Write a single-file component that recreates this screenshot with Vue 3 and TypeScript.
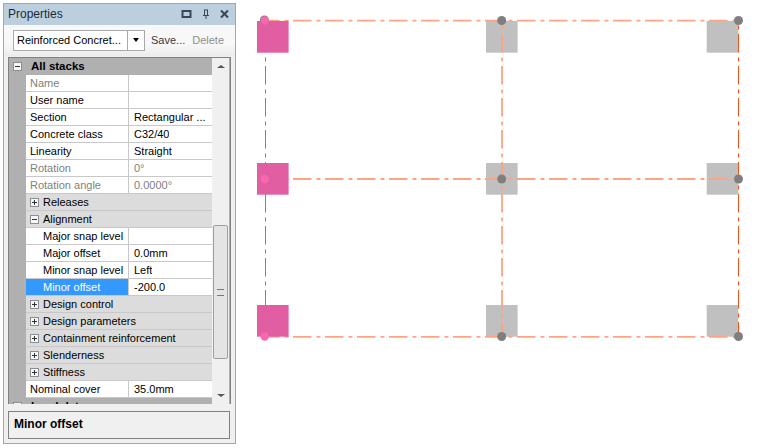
<script setup lang="ts">
type Row = { kind: 'group' | 'prop'; label: string; value?: string; indent?: boolean; open?: boolean; disabled?: boolean; selected?: boolean };
const rows: Row[] = [
  { kind: 'prop', label: 'Name', disabled: true, value: '' },
  { kind: 'prop', label: 'User name', value: '' },
  { kind: 'prop', label: 'Section', value: 'Rectangular ...' },
  { kind: 'prop', label: 'Concrete class', value: 'C32/40' },
  { kind: 'prop', label: 'Linearity', value: 'Straight' },
  { kind: 'prop', label: 'Rotation', value: '0°', disabled: true },
  { kind: 'prop', label: 'Rotation angle', value: '0.0000°', disabled: true },
  { kind: 'group', label: 'Releases' },
  { kind: 'group', label: 'Alignment', open: true },
  { kind: 'prop', label: 'Major snap level', value: '', indent: true },
  { kind: 'prop', label: 'Major offset', value: '0.0mm', indent: true },
  { kind: 'prop', label: 'Minor snap level', value: 'Left', indent: true },
  { kind: 'prop', label: 'Minor offset', value: '-200.0', indent: true, selected: true },
  { kind: 'group', label: 'Design control' },
  { kind: 'group', label: 'Design parameters' },
  { kind: 'group', label: 'Containment reinforcement' },
  { kind: 'group', label: 'Slenderness' },
  { kind: 'group', label: 'Stiffness' },
  { kind: 'prop', label: 'Nominal cover', value: '35.0mm' },
];
const colXs = [257, 486, 706.7];
const colYs = [21, 163, 305];
const dotXs = [264.7, 501.7, 738.5];
const dotYs = [20.5, 179, 336.5];
const lineYs = [20.7, 179, 336.9];
</script>

<template>
  <div class="page">
    <aside class="panel">
      <header class="title">
        <span>Properties</span>
        <span class="title-icons">
          <svg width="12" height="10" viewBox="0 0 12 10"><rect x="1.5" y="2" width="8" height="6" fill="none" stroke="#3c4650" stroke-width="2" /></svg>
          <svg width="12" height="11" viewBox="0 0 12 11"><path d="M4.5 1v5M7.5 1v5M3 6.5h6M6 6.5V10M4 1h4" fill="none" stroke="#3c4650" /></svg>
          <svg width="11" height="10" viewBox="0 0 11 10"><path d="M2 1.5l7 7M9 1.5l-7 7" fill="none" stroke="#3c4650" stroke-width="2" /></svg>
        </span>
      </header>
      <div class="tools">
        <div class="combo">
          <span class="combo-text">Reinforced Concret...</span>
          <span class="combo-arrow"><i></i></span>
        </div>
        <span class="link">Save...</span>
        <span class="link off">Delete</span>
      </div>
      <div class="grid">
        <div class="grid-main">
          <div class="row head">
            <span class="gutter-cell"><span class="box minus"></span></span>
            <b>All stacks</b>
          </div>
          <div v-for="r in rows" :key="r.label" class="row" :class="r.kind">
            <span class="gutter-cell"></span>
            <template v-if="r.kind === 'group'">
              <span class="box" :class="r.open ? 'minus' : 'plus'"></span>
              <span class="group-label">{{ r.label }}</span>
            </template>
            <template v-else>
              <span class="name" :class="{ indent: r.indent, dim: r.disabled, sel: r.selected }">{{ r.label }}</span>
              <span class="value" :class="{ dim: r.disabled }">{{ r.value }}</span>
            </template>
          </div>
          <div class="row head">
            <span class="gutter-cell"><span class="box plus"></span></span>
            <b>Load data</b>
          </div>
        </div>
        <div class="scroll">
          <span class="arrow up"></span>
          <div class="track"><div class="thumb"><i></i></div></div>
          <span class="arrow down"></span>
        </div>
      </div>
      <div class="desc"><b>Minor offset</b></div>
    </aside>
    <svg class="canvas" width="768" height="448" viewBox="0 0 768 448">
      <template v-for="y in colYs" :key="'g' + y">
        <rect v-for="x in colXs.slice(1)" :key="x" :x="x" :y="y" width="31.6" height="31.7" fill="#c0c0c0" />
      </template>
      <line v-for="y in lineYs" :key="'h' + y" x1="261" x2="739" :y1="y" :y2="y" class="axis wide" />
      <line x1="502" x2="502" y1="2" y2="337" class="axis wide" />
      <line x1="265.5" x2="265.5" y1="2" y2="337" class="axis thin" />
      <line x1="738.5" x2="738.5" y1="2" y2="337" class="axis thin right" />
      <rect v-for="y in colYs" :key="'p' + y" x="257" :y="y" width="31.6" height="31.7" fill="#e15ea3" />
      <rect x="735" y="1" width="8" height="19" fill="#fff" />
      <rect x="498" y="1" width="8" height="19" fill="#fff" />
      <rect x="261" y="1" width="8" height="19" fill="#fff" />
      <circle cx="264.4" cy="20" r="4.5" fill="#7f7f7f" />
      <template v-for="y in dotYs" :key="'d' + y">
        <circle v-for="(x, i) in dotXs" :key="x" :cx="x" :cy="y" :r="i === 0 ? 4.2 : 4.5" :fill="i === 0 ? '#fb67ae' : '#7f7f7f'" />
      </template>
    </svg>
  </div>
</template>

<style scoped>
.page {
  position: relative;
  width: 768px;
  height: 448px;
  background: #fff;
  overflow: hidden;
  font-family: "Liberation Sans", Arial, sans-serif;
  font-size: 11px;
  color: #000;
}
.canvas { position: absolute; left: 0; top: 0; }
.axis { stroke-dasharray: 18.5 5 4 4.5; }
.axis.wide { stroke: #ffa481; stroke-width: 1.8; }
.axis.thin { stroke: #ff5a14; stroke-width: 1; }
.axis.right { stroke: #ee5218; }
.panel {
  position: absolute;
  left: 3px;
  top: 3px;
  width: 233px;
  height: 441px;
  box-sizing: border-box;
  border: 1px solid #a6a6a6;
  background: #f0f0f0;
  z-index: 1;
  display: flex;
  flex-direction: column;
}
.title {
  height: 21px;
  background: #bccfdf;
  display: flex;
  align-items: center;
  justify-content: space-between;
  padding: 0 5px 1px 4px;
  box-sizing: border-box;
  font-size: 12px;
  color: #1c2a36;
  flex: none;
}
.title-icons { display: flex; gap: 7px; align-items: center; }
.title-icons svg { display: block; }
.tools {
  height: 31px;
  flex: none;
  display: flex;
  align-items: center;
  padding: 0 0 1px 9px;
  box-sizing: border-box;
  background: linear-gradient(#f8f8f8, #f8f8f8 60%, #ececec);
}
.combo {
  width: 132px;
  height: 21px;
  box-sizing: border-box;
  border: 1px solid #a9a9a9;
  background: #fff;
  display: flex;
  align-items: center;
  color: #000;
  flex: none;
}
.combo-text { flex: 1; padding-left: 3px; white-space: nowrap; overflow: hidden; }
.combo-arrow {
  width: 16px;
  height: 100%;
  border-left: 1px solid #a9a9a9;
  display: flex;
  align-items: center;
  justify-content: center;
}
.combo-arrow i {
  width: 0;
  height: 0;
  border: 3.5px solid transparent;
  border-top: 4px solid #000;
  border-bottom: 0;
}
.link { margin-left: 6px; color: #3a3a3a; }
.link.off { color: #8f8f8f; margin-left: 7px; }
.grid {
  margin: 1px 4px 0;
  height: 347px;
  flex: none;
  box-sizing: border-box;
  border: 1px solid #808080;
  border-bottom: 0;
  display: flex;
  background: #b0b0b0;
  overflow: hidden;
}
.grid-main { width: 203px; flex: none; }
.row {
  height: 17px;
  box-sizing: border-box;
  display: flex;
  align-items: center;
  background: #fff;
  border-bottom: 1px solid #c8c8c8;
  white-space: nowrap;
}
.gutter-cell {
  width: 17px;
  height: 17px;
  flex: none;
  background: #b0b0b0;
  display: flex;
  align-items: center;
  justify-content: center;
}
.row.head { background: #b0b0b0; border-bottom: 0; }
.row.head b {
  padding-left: 5px;
  font-weight: 700;
  font-size: 11.5px;
  align-self: flex-start;
  line-height: 16px;
}
.row.group { background: #dcdcdc; }
.name {
  width: 103px;
  flex: none;
  height: 100%;
  padding-left: 4px;
  box-sizing: border-box;
  border-right: 1px solid #c8c8c8;
  line-height: 16px;
  overflow: hidden;
}
.name.indent { padding-left: 17px; }
.name.sel { background: #3399ff; color: #fff; }
.value { padding-left: 5px; line-height: 16px; overflow: hidden; }
.dim { color: #808080; }
.group-label { margin-left: 4px; align-self: flex-start; line-height: 16px; }
.box {
  width: 9px;
  height: 9px;
  box-sizing: border-box;
  border: 1px solid #8a8f96;
  background: #f4f6f8;
  position: relative;
  flex: none;
  margin-left: 4px;
  display: block;
}
.gutter-cell .box { margin-left: 0; }
.box::before {
  content: "";
  position: absolute;
  left: 1px;
  top: 3px;
  width: 5px;
  height: 1px;
  background: #333;
}
.box.plus::after {
  content: "";
  position: absolute;
  left: 3px;
  top: 1px;
  width: 1px;
  height: 5px;
  background: #333;
}
.scroll {
  width: 17px;
  flex: none;
  background: #f0f0f0;
  display: flex;
  flex-direction: column;
  align-items: center;
}
.arrow { width: 0; height: 0; border: 4px solid transparent; flex: none; }
.arrow.up { border-bottom: 3px solid #555; border-top: 0; margin-top: 7px; }
.arrow.down { border-top: 3px solid #555; border-bottom: 0; margin-bottom: 7px; }
.track { flex: 1; width: 100%; padding-top: 157px; box-sizing: border-box; }
.thumb {
  width: 15px;
  height: 134px;
  margin: 0 auto;
  box-sizing: border-box;
  border: 1px solid #a0a0a0;
  border-radius: 2px;
  background: #e4e4e4;
  display: flex;
  align-items: center;
  justify-content: center;
}
.thumb i {
  width: 7px;
  height: 5px;
  border-top: 1px solid #777;
  border-bottom: 1px solid #777;
}
.desc {
  margin: 7px 5px 0 4px;
  height: 28px;
  flex: none;
  box-sizing: border-box;
  border: 1px solid #808080;
  padding: 5px 5px;
  font-size: 12px;
  background: #f0f0f0;
}
</style>

<style>
html, body { margin: 0; background: #fff; }
</style>
